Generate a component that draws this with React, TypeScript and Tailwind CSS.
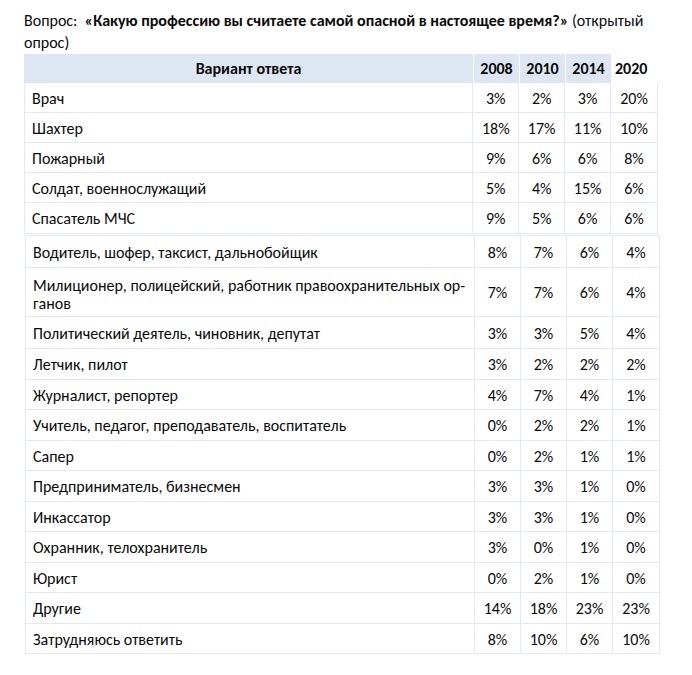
import React from "react";

// строка опроса: вариант ответа, значения по годам, высота строки
type Row = { label: React.ReactNode; values: string[]; h: string; top?: boolean };

const firstPart: Row[] = [
  { label: "Врач", values: ["3%", "2%", "3%", "20%"], h: "h-[30px]" },
  { label: "Шахтер", values: ["18%", "17%", "11%", "10%"], h: "h-[30px]" },
  { label: "Пожарный", values: ["9%", "6%", "6%", "8%"], h: "h-[30px]" },
  { label: "Солдат, военнослужащий", values: ["5%", "4%", "15%", "6%"], h: "h-[30px]" },
  { label: "Спасатель МЧС", values: ["9%", "5%", "6%", "6%"], h: "h-[31px]" },
];

const secondPart: Row[] = [
  { label: "Водитель, шофер, таксист, дальнобойщик", values: ["8%", "7%", "6%", "4%"], h: "h-[32px]" },
  {
    label: (
      <>
        Милиционер, полицейский, работник правоохранительных ор-
        <br />
        ганов
      </>
    ),
    values: ["7%", "7%", "6%", "4%"],
    h: "h-[49px]",
    top: true,
  },
  { label: "Политический деятель, чиновник, депутат", values: ["3%", "3%", "5%", "4%"], h: "h-[32px]" },
  { label: "Летчик, пилот", values: ["3%", "2%", "2%", "2%"], h: "h-[31px]" },
  { label: "Журналист, репортер", values: ["4%", "7%", "4%", "1%"], h: "h-[30px]" },
  { label: "Учитель, педагог, преподаватель, воспитатель", values: ["0%", "2%", "2%", "1%"], h: "h-[31px]" },
  { label: "Сапер", values: ["0%", "2%", "1%", "1%"], h: "h-[30px]" },
  { label: "Предприниматель, бизнесмен", values: ["3%", "3%", "1%", "0%"], h: "h-[31px]" },
  { label: "Инкассатор", values: ["3%", "3%", "1%", "0%"], h: "h-[30px]" },
  { label: "Охранник, телохранитель", values: ["3%", "0%", "1%", "0%"], h: "h-[31px]" },
  { label: "Юрист", values: ["0%", "2%", "1%", "0%"], h: "h-[30px]" },
  { label: "Другие", values: ["14%", "18%", "23%", "23%"], h: "h-[31px]" },
  { label: "Затрудняюсь ответить", values: ["8%", "10%", "6%", "10%"], h: "h-[30px]" },
];

const years = ["2008", "2010", "2014", "2020"];

const TableRows = ({ rows }: { rows: Row[] }) => (
  <>
    {rows.map((row, i) => (
      <div key={i} className={`flex border-b border-[#e4e9f0] ${row.h}`}>
        <div
          className={`w-[449px] flex pl-[7px] border-r border-[#e4e9f0] ${
            row.top ? "items-start pt-[9px] leading-[18px]" : "items-center pt-[2px] leading-[20px]"
          }`}
        >
          <span>{row.label}</span>
        </div>
        {row.values.map((v, j) => (
          <div
            key={j}
            className={`w-[46px] flex items-center justify-center pt-[2px] ${j < 3 ? "border-r border-[#e4e9f0]" : ""}`}
          >
            {v}
          </div>
        ))}
      </div>
    ))}
  </>
);

export default function App() {
  return (
    <div
      className="w-[692px] h-[675px] bg-white text-[#0a0a0a] pl-[24px] pt-[10px] text-[16px]"
      style={{ fontFamily: "Carlito, 'Liberation Sans Narrow', 'Open Sans', sans-serif" }}
    >
      {/* вопрос */}
      <p className="leading-[22px]">
        Вопрос:&nbsp; <b>«Какую профессию вы считаете самой опасной в настоящее время?»</b> (открытый
        <br />
        опрос)
      </p>

      {/* шапка таблицы */}
      <div className="flex h-[29px] font-bold w-[634px]">
        <div className="w-[449px] bg-[#dde6f2] flex items-center justify-center pt-px">Вариант ответа</div>
        {years.map((y, i) => (
          <div
            key={y}
            className={`w-[46px] flex items-center pt-px border-l border-white ${i < 3 ? "bg-[#dde6f2] justify-center" : "pl-[3px]"}`}
          >
            {y}
          </div>
        ))}
      </div>

      {/* тело таблицы, склеено из двух частей */}
      <div className="w-[634px] border-l border-r border-[#e4e9f0]">
        <TableRows rows={firstPart} />
      </div>
      <div className="w-[635px] ml-px mt-px border-l border-r border-t border-[#e4e9f0]">
        <TableRows rows={secondPart} />
      </div>
    </div>
  );
}
